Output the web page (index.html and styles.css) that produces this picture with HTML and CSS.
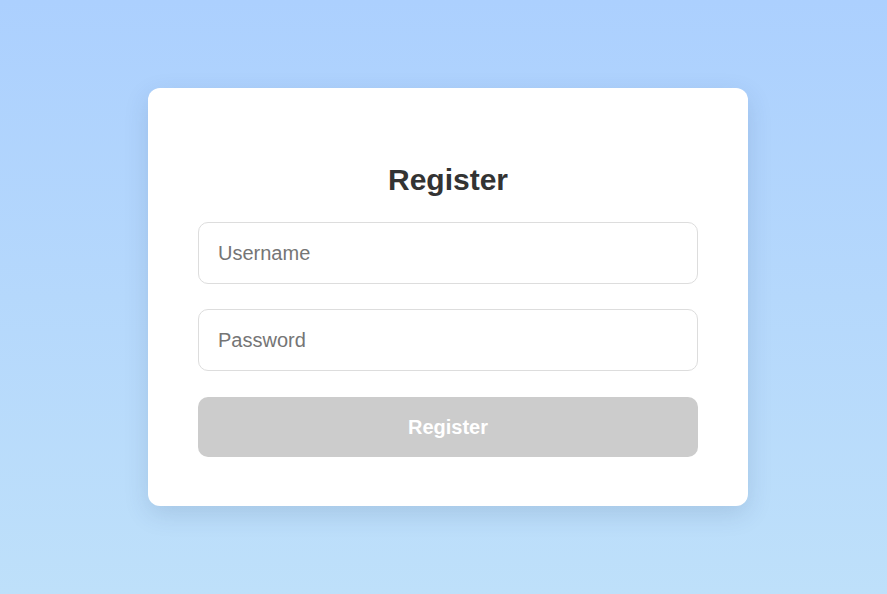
FILE: index.html
```html
<!DOCTYPE html>
<html>
<head>
<meta charset="utf-8">
<link rel="stylesheet" href="styles.css">
</head>
<body>
<div class="page">
  <div class="card">
    <h2 class="title">Register</h2>
    <form class="form">
      <input class="field" type="text" placeholder="Username">
      <input class="field" type="password" placeholder="Password">
      <button class="btn" type="button">Register</button>
    </form>
  </div>
</div>
</body>
</html>
```
FILE: styles.css
```css
html, body {
  margin: 0;
  padding: 0;
  height: 100%;
}
body {
  font-family: "Liberation Sans", Arial, sans-serif;
  background: linear-gradient(180deg, #acd0fe 0%, #bee0fa 100%);
}
.page {
  height: 100%;
  display: flex;
  justify-content: center;
  padding: 88px 0 0 9px;
  box-sizing: border-box;
}
.card {
  width: 600px;
  height: 418px;
  box-sizing: border-box;
  background: #fff;
  border-radius: 12px;
  padding: 75px 50px 50px;
  box-shadow: 0 8px 24px rgba(40, 70, 110, 0.15);
}
.title {
  margin: 0 0 25px;
  font-size: 30px;
  line-height: 34px;
  font-weight: bold;
  color: #333;
  text-align: center;
}
.form {
  display: flex;
  flex-direction: column;
  gap: 25px;
}
.field {
  height: 62px;
  box-sizing: border-box;
  border: 1px solid #ddd;
  border-radius: 10px;
  padding: 0 19px;
  font-family: "Liberation Sans", Arial, sans-serif;
  font-size: 20px;
  color: #333;
  outline: none;
}
.field::placeholder {
  color: #757575;
}
.btn {
  margin-top: 1px;
  height: 60px;
  border: none;
  border-radius: 10px;
  background: #cccccc;
  color: #fff;
  font-family: "Liberation Sans", Arial, sans-serif;
  font-size: 20px;
  font-weight: bold;
}
```
